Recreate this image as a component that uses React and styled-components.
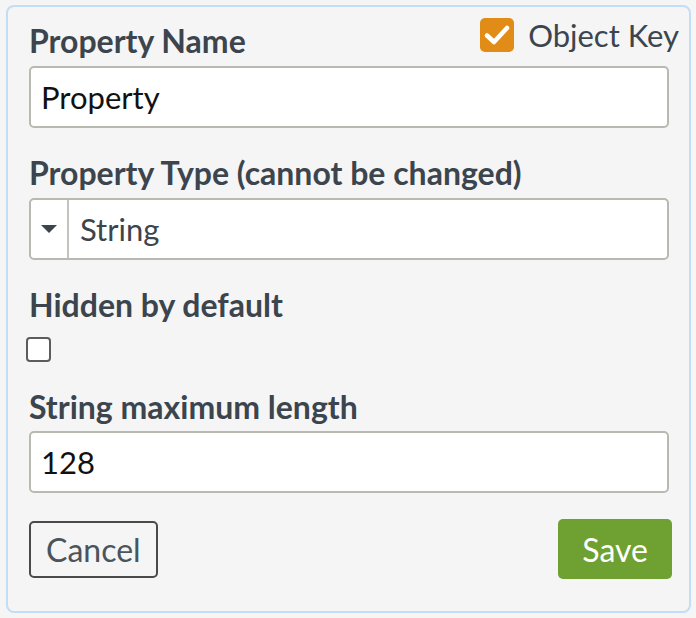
import React from "react";
import styled, { createGlobalStyle } from "styled-components";

const GlobalStyle = createGlobalStyle`
  html, body { margin: 0; padding: 0; background: #f5f5f5; }
  body { font-family: Lato, "Open Sans", sans-serif; }
  * { box-sizing: border-box; }
`;

const Panel = styled.div`
  margin: 5px 0 0 6px;
  width: 685px;
  height: 608px;
  border: 2px solid #c3ddf7;
  border-radius: 8px;
  background: #f5f5f5;
  padding: 15px 20px 0 21px;
`;

const HeaderRow = styled.div`
  display: flex;
  justify-content: space-between;
  align-items: flex-start;
  margin-right: -10px;
`;

const Field = styled.div`
  margin-bottom: 26px;
`;

const Label = styled.div`
  font-weight: 700;
  font-size: 32px;
  line-height: 38px;
  color: #3c454d;
  margin-bottom: ${(p) => p.$gap ?? 6}px;
`;

const KeyToggle = styled.label`
  display: flex;
  align-items: center;
  gap: 14px;
  margin-top: -4px;
  font-size: 31px;
  line-height: 34px;
  color: #3c454d;
`;

const Box = styled.span`
  display: flex;
  align-items: center;
  justify-content: center;
  width: ${(p) => p.$size}px;
  height: ${(p) => p.$size}px;
  margin-left: ${(p) => p.$offset ?? 0}px;
  border-radius: ${(p) => (p.$checked ? 5 : 4)}px;
  background: ${(p) => (p.$checked ? "#e08c17" : "#fff")};
  border: ${(p) => (p.$checked ? "none" : "2px solid #5c5c5c")};
`;

const Input = styled.div`
  height: 62px;
  border: 2px solid #b9b9b2;
  border-radius: 5px;
  background: #fff;
  display: flex;
  align-items: center;
  padding: 0 10px;
  font-size: 31px;
  color: #111;
`;

const Select = styled.div`
  height: 62px;
  border: 2px solid #b9b9b2;
  border-radius: 5px;
  background: #fff;
  display: flex;
  align-items: stretch;
`;

const Caret = styled.div`
  width: 38px;
  border-right: 2px solid #c4c4bd;
  display: flex;
  align-items: center;
  justify-content: center;
`;

const SelectValue = styled.div`
  display: flex;
  align-items: center;
  padding-left: 11px;
  font-size: 31px;
  color: #3c454d;
`;

const Actions = styled.div`
  display: flex;
  justify-content: space-between;
  align-items: center;
  margin-right: -3px;
`;

const Button = styled.button`
  font-family: inherit;
  font-size: 32px;
  border-radius: 5px;
  cursor: pointer;
  height: ${(p) => (p.$primary ? 60 : 57)}px;
  background: ${(p) => (p.$primary ? "#6ea132" : "transparent")};
  color: ${(p) => (p.$primary ? "#fff" : "#4a545c")};
  border: ${(p) => (p.$primary ? "none" : "2px solid #4a4a4a")};
  padding: ${(p) => (p.$primary ? "0 24px" : "0 15px")};
`;

const Check = () => (
  <svg width="26" height="22" viewBox="0 0 26 22">
    <path d="M3 11.5 L10 18 L23 4" fill="none" stroke="#fff" strokeWidth="4.5" strokeLinecap="round" strokeLinejoin="round" />
  </svg>
);

export default function App() {
  return (
    <>
      <GlobalStyle />
      <Panel>
        <Field>
          <HeaderRow>
            <Label>Property Name</Label>
            <KeyToggle>
              <Box $size={34} $checked>
                <Check />
              </Box>
              Object Key
            </KeyToggle>
          </HeaderRow>
          <Input>Property</Input>
        </Field>
        <Field>
          <Label>Property Type (cannot be changed)</Label>
          <Select>
            <Caret>
              <svg width="18" height="10" viewBox="0 0 18 10">
                <path d="M1 1 H17 L9 9 Z" fill="#3c454d" />
              </svg>
            </Caret>
            <SelectValue>String</SelectValue>
          </Select>
        </Field>
        <Field>
          <Label $gap={13}>Hidden by default</Label>
          <Box $size={25} $offset={-3} />
        </Field>
        <Field>
          <Label $gap={5}>String maximum length</Label>
          <Input>128</Input>
        </Field>
        <Actions>
          <Button>Cancel</Button>
          <Button $primary>Save</Button>
        </Actions>
      </Panel>
    </>
  );
}
